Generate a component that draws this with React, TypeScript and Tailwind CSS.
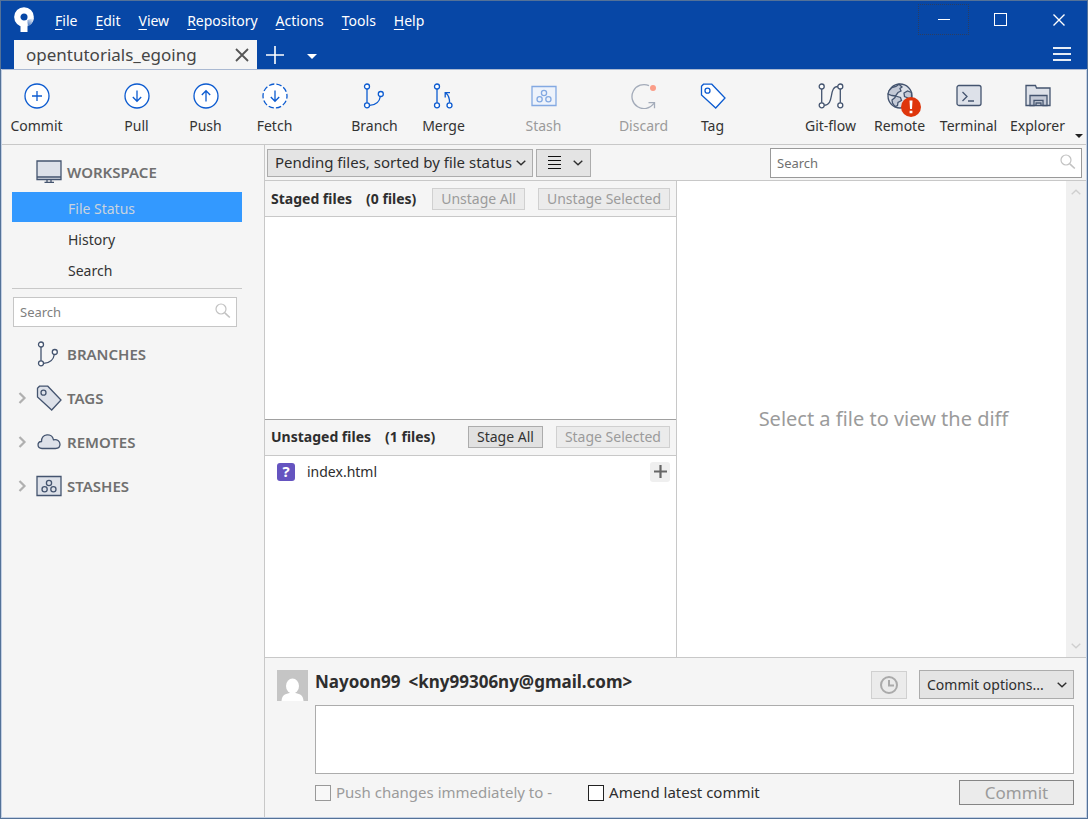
import type { ReactNode } from 'react';

const menus = ['File', 'Edit', 'View', 'Repository', 'Actions', 'Tools', 'Help'];

function Chevron({ className = '' }: { className?: string }) {
  return (
    <svg className={className} width="10" height="6" viewBox="0 0 10 6" fill="none" stroke="currentColor" strokeWidth="1.4">
      <path d="M0.7 0.7 5 4.8 9.3 0.7" />
    </svg>
  );
}

function Magnifier({ className = '' }: { className?: string }) {
  return (
    <svg className={className} width="16" height="16" viewBox="0 0 16 16" fill="none" stroke="#c2c2c2" strokeWidth="1.2">
      <circle cx="6" cy="6" r="5" />
      <path d="m9.8 9.8 5 4.7" strokeWidth="1.6" />
    </svg>
  );
}

function Icon({ children, color = '#0c5bd0', className = '' }: { children: ReactNode; color?: string; className?: string }) {
  return (
    <svg className={className} width="26" height="26" viewBox="0 0 26 26" fill="none" stroke={color} strokeWidth="1.3">
      {children}
    </svg>
  );
}

function CommitShape() {
  return (
    <>
      <circle cx="13" cy="13" r="12" fill="#fff" />
      <path d="M13 8v10M8 13h10" />
    </>
  );
}

function PullShape() {
  return (
    <>
      <circle cx="13" cy="13" r="12" fill="#fff" />
      <path d="M13 7.5v10.8M8.800 14l4.200 4.300 4.200-4.300" />
    </>
  );
}

function PushShape() {
  return (
    <>
      <circle cx="13" cy="13" r="12" fill="#fff" />
      <path d="M13 18.500V7.700M8.800 12 13 7.700l4.200 4.300" />
    </>
  );
}

function FetchShape() {
  return (
    <>
      <circle cx="13" cy="13" r="12" fill="#fff" strokeDasharray="5.4 2.14" strokeDashoffset="2.7" />
      <path d="M13 7.500v10.800M8.800 14l4.200 4.300 4.200-4.300" />
    </>
  );
}

function BranchShape() {
  return (
    <>
      <path d="M5 6v14M7.600 22.300c6.600-.2 10.200-4.300 10.800-9.300" />
      <circle cx="5" cy="3.500" r="2.500" fill="#fff" />
      <circle cx="5" cy="22.300" r="2.500" fill="#fff" />
      <circle cx="18.800" cy="11" r="2.500" fill="#fff" />
    </>
  );
}

function MergeShape() {
  return (
    <>
      <path d="M6 6v14M18.500 19.800c.2-4.500-.6-7.300-3.500-9.600M14.200 14.500v-4.800h4.800" />
      <circle cx="6" cy="3.500" r="2.500" fill="#fff" />
      <circle cx="6" cy="22.300" r="2.500" fill="#fff" />
      <circle cx="18.500" cy="22.300" r="2.500" fill="#fff" />
    </>
  );
}

function StashShape({ fill }: { fill: string }) {
  return (
    <>
      <path d="M1 3.500h24v19H1z" fill={fill} />
      <circle cx="13" cy="10" r="2.600" />
      <circle cx="8.600" cy="16.200" r="2.600" />
      <circle cx="17.400" cy="16.200" r="2.600" />
    </>
  );
}

function DiscardShape() {
  return (
    <>
      <path d="M18 2.700A12 12 0 1 0 22.800 20.500M17.500 19.700h6v5.500" />
      <circle cx="22" cy="5" r="3" fill="#fb9d88" stroke="none" />
    </>
  );
}

function TagShape({ fill }: { fill: string }) {
  return (
    <>
      <path d="M1.500 3.300 3.500 1.200h8.300L25 15l-9.300 10L1.500 12z" fill={fill} />
      <circle cx="7.500" cy="7.700" r="2.500" />
    </>
  );
}

function FlowShape() {
  return (
    <>
      <path d="M3.700 6v14M22.300 6v14M6 22.300c11 0 4-18.800 14-18.800" />
      <circle cx="3.700" cy="3.500" r="2.500" fill="#fff" />
      <circle cx="3.700" cy="22.300" r="2.500" fill="#fff" />
      <circle cx="22.300" cy="3.500" r="2.500" fill="#fff" />
      <circle cx="22.300" cy="22.300" r="2.500" fill="#fff" />
    </>
  );
}

function RemoteShape() {
  return (
    <>
      <circle cx="13" cy="13" r="12" fill="#dde1e9" />
      <path d="M5 4.500 9 3.500l3-2.300L15 4l-2 1.500L14 8l-3 1.500L8.500 13l-3.500-.5-4-1.500C1.500 8 3 6 5 4.500z" fill="#c3c9d6" />
      <path d="M8.500 13l5 1.500 1 3-3.500 2-.5 3-2.500 1.200L5.500 20 5 17l3-2.500zM24.500 9.500 20.500 8l-3.500 2 .5 3.500 3.500 1.500 3.500 1z" fill="#c3c9d6" />
    </>
  );
}

function TerminalShape() {
  return (
    <>
      <rect x="1" y="2.500" width="24" height="20" rx="2" fill="#dde1e9" />
      <path d="m6.500 9 4.500 4.500L6.500 18M12 18h6" />
    </>
  );
}

function ExplorerShape() {
  return (
    <>
      <path d="M1 22.500V2.500h9.500l1 2.500H25v17.500z" fill="#dde1e9" />
      <path d="M5 22.500v-10h17v10h-4v-5H9v5z" fill="#c3c9d6" />
      <path d="M11 22.500v-2.500h5v2.500" />
    </>
  );
}

function ToolButton({ label, color, disabled, badge, children }: { label: string; color?: string; disabled?: boolean; badge?: boolean; children: ReactNode }) {
  return (
    <button type="button" disabled={disabled} className="flex w-[69px] shrink-0 flex-col items-center gap-[7px] text-sm text-[#333] disabled:text-[#9b9b9b]">
      <span className="relative">
        <Icon color={color}>{children}</Icon>
        {badge && (
          <svg className="absolute top-3.5 left-3.5" width="20" height="20" viewBox="0 0 20 20">
            <circle cx="10" cy="10" r="10" fill="#df360c" />
            <path d="M8.500 3.500h3l-.5 8.500H9zM8.600 13.700h2.800v2.600H8.600z" fill="#fff" />
          </svg>
        )}
      </span>
      {label}
    </button>
  );
}

function TitleBar() {
  return (
    <div className="flex h-[39px] items-center pl-[13px] text-white">
      <svg className="mb-0.5" width="20" height="25" viewBox="0 0 20 25">
        <defs>
          <linearGradient id="stem" gradientUnits="userSpaceOnUse" x1="19" y1="11" x2="13" y2="19">
            <stop offset="0" stopColor="#fff" />
            <stop offset="1" stopColor="#3a6cb9" />
          </linearGradient>
        </defs>
        <circle cx="10" cy="10" r="6.700" fill="none" stroke="#fff" strokeWidth="6.300" />
        <path d="M13.500 13 19.800 11c-.5 4.500-2.800 7.300-6.300 8.300z" fill="url(#stem)" />
        <path d="M6.500 16.500h7V25h-7z" fill="#fff" />
      </svg>
      <nav className="ml-[21px] flex gap-[18px] text-sm">
        {menus.map((menu) => (
          <button key={menu} type="button">
            <span className="underline underline-offset-3">{menu[0]}</span>
            {menu.slice(1)}
          </button>
        ))}
      </nav>
      <div className="mt-[3px] mr-px ml-auto flex self-start">
        <button type="button" aria-label="Minimize" className="flex h-[31px] w-[51px] items-center justify-center border border-dotted border-[#2c3d5f]">
          <span className="h-px w-3 bg-white" />
        </button>
        <button type="button" aria-label="Maximize" className="flex h-[31px] w-[63px] items-center justify-center">
          <span className="size-[13px] border border-white" />
        </button>
        <button type="button" aria-label="Close" className="flex h-[31px] w-[54px] items-center justify-center">
          <svg width="12" height="12" viewBox="0 0 12 12" stroke="#fff" strokeWidth="1.400">
            <path d="m.5.5 11 11M11.500.5l-11 11" />
          </svg>
        </button>
      </div>
    </div>
  );
}

function TabBar() {
  return (
    <div className="flex h-[29px] items-center pl-[13px] text-white">
      <div className="flex h-full w-[243px] items-center justify-between bg-[#f5f5f5] pr-2 pl-3 text-[17px] text-[#454545]">
        opentutorials_egoing
        <button type="button" aria-label="Close tab">
          <svg width="14" height="14" viewBox="0 0 14 14" stroke="#555" strokeWidth="1.800">
            <path d="m1 1 12 12M13 1 1 13" />
          </svg>
        </button>
      </div>
      <button type="button" aria-label="New tab" className="ml-[9px]">
        <svg width="18" height="18" viewBox="0 0 18 18" stroke="#fff" strokeWidth="1.600">
          <path d="M9 0v18M0 9h18" />
        </svg>
      </button>
      <button type="button" aria-label="Tab list" className="mt-1 ml-[23px]">
        <svg width="10" height="5" viewBox="0 0 10 5" fill="#fff">
          <path d="M0 0h10L5 5z" />
        </svg>
      </button>
      <button type="button" aria-label="Menu" className="mr-4 mb-0.5 ml-auto flex w-[18px] flex-col gap-1">
        <span className="h-0.5 bg-white/90" />
        <span className="h-0.5 bg-white/90" />
        <span className="h-0.5 bg-white/90" />
      </button>
    </div>
  );
}

function Toolbar() {
  return (
    <div className="flex h-[76px] items-start border-t border-b border-t-[#aab9d2] border-b-[#c8c8c8] pt-[13px]">
      <div className="flex gap-[31px]">
        <ToolButton label="Commit"><CommitShape /></ToolButton>
        <div className="flex">
          <ToolButton label="Pull"><PullShape /></ToolButton>
          <ToolButton label="Push"><PushShape /></ToolButton>
          <ToolButton label="Fetch"><FetchShape /></ToolButton>
        </div>
        <div className="flex">
          <ToolButton label="Branch"><BranchShape /></ToolButton>
          <ToolButton label="Merge"><MergeShape /></ToolButton>
        </div>
        <ToolButton label="Stash" color="#83a9e2" disabled><StashShape fill="#eef3fb" /></ToolButton>
        <div className="flex">
          <ToolButton label="Discard" color="#a3abb9" disabled><DiscardShape /></ToolButton>
          <ToolButton label="Tag"><TagShape fill="#fff" /></ToolButton>
        </div>
      </div>
      <div className="ml-auto flex">
        <ToolButton label="Git-flow" color="#44546f"><FlowShape /></ToolButton>
        <ToolButton label="Remote" color="#44546f" badge><RemoteShape /></ToolButton>
        <ToolButton label="Terminal" color="#44546f"><TerminalShape /></ToolButton>
        <ToolButton label="Explorer" color="#44546f"><ExplorerShape /></ToolButton>
      </div>
      <button type="button" aria-label="More tools" className="mr-[3px] mb-1.5 ml-[3px] self-end">
        <svg width="8" height="4" viewBox="0 0 8 4" fill="#222">
          <path d="M0 0h8L4 4z" />
        </svg>
      </button>
    </div>
  );
}

function Section({ label, expandable, children }: { label: string; expandable?: boolean; children: ReactNode }) {
  return (
    <button type="button" className="flex h-11 w-full items-center pl-4 text-[15px] font-semibold text-[#707070]">
      <span className="flex w-[18px]">
        {expandable && (
          <svg width="9" height="12" viewBox="0 0 9 12" fill="none" stroke="#b0b0b0" strokeWidth="2.200">
            <path d="m1.500 1 5 5-5 5" />
          </svg>
        )}
      </span>
      <Icon color="#44546f" className="mr-[5px]">{children}</Icon>
      {label}
    </button>
  );
}

function Sidebar() {
  return (
    <aside className="w-[262px] shrink-0 pt-[5px]">
      <Section label="WORKSPACE">
        <path d="M1 2h24v18.500H1z" fill="#dde1e9" />
        <path d="M1 18h24M11 20.500v2.500M15 20.500v2.500M8.500 23.300h9.500" />
      </Section>
      <nav className="-mt-0.5 mr-[22px] ml-2.5 flex flex-col gap-px border-b border-[#c8c8c8] pb-1 text-sm text-[#333]">
        <a href="#status" className="flex h-[30px] items-center bg-[#3399ff] pt-1 pl-14 text-[#c9d3de]">File Status</a>
        <a href="#history" className="flex h-[30px] items-center pt-1 pl-14">History</a>
        <a href="#search" className="flex h-[30px] items-center pt-1 pl-14">Search</a>
      </nav>
      <div className="relative mt-2 mr-[27px] mb-[5px] ml-[11px]">
        <input aria-label="Search branches" placeholder="Search" className="block h-[30px] w-full border border-[#c6c6c6] bg-white px-1.5 text-[13px] outline-none placeholder:text-[#808080]" />
        <Magnifier className="absolute top-1.5 right-1.5" />
      </div>
      <Section label="BRANCHES"><BranchShape /></Section>
      <Section label="TAGS" expandable><TagShape fill="#dde1e9" /></Section>
      <Section label="REMOTES" expandable>
        <path d="M6 19.500C.8 19.300.8 12.800 5.500 12.500 5.500 4.500 16 3.500 17.500 10.800c3.500-1 6.500 1.200 6.500 4.500 0 2.800-1.800 4.200-4.500 4.200z" fill="#dde1e9" />
      </Section>
      <Section label="STASHES" expandable><StashShape fill="#dde1e9" /></Section>
    </aside>
  );
}

function SmallButton({ children, disabled }: { children: ReactNode; disabled?: boolean }) {
  return (
    <button type="button" disabled={disabled} className="h-[22px] shrink-0 border border-[#acacac] bg-[#e1e1e1] px-2 text-sm whitespace-nowrap text-[#333] disabled:border-[#d0d0d0] disabled:bg-[#ebebeb] disabled:text-[#9b9b9b]">
      {children}
    </button>
  );
}

function FileHeader({ title, count, children }: { title: string; count: number; children: ReactNode }) {
  return (
    <div className="flex h-9 shrink-0 items-center justify-between border-b border-[#c8c8c8] bg-[#f5f5f5] px-1.5">
      <h2 className="flex gap-3.5 text-sm font-bold whitespace-nowrap">
        <span>{title}</span>
        <span>({count} files)</span>
      </h2>
      <div className="flex gap-[13px]">{children}</div>
    </div>
  );
}

function FilterBar() {
  return (
    <div className="flex h-9 items-center border-b border-[#c8c8c8] pr-1 pl-0.5">
      <div className="relative">
        <select aria-label="File filter" className="block h-7 w-[266px] appearance-none border border-[#acacac] bg-[#e4e4e4] px-[7px] text-[15px] outline-none">
          <option>Pending files, sorted by file status</option>
        </select>
        <Chevron className="pointer-events-none absolute top-[11px] right-[7px]" />
      </div>
      <button type="button" aria-label="View mode" className="ml-[3px] flex h-7 w-[55px] items-center justify-between border border-[#acacac] bg-[#e4e4e4] pr-[7px] pl-[11px]">
        <svg width="13" height="13" viewBox="0 0 13 13" stroke="#111">
          <path d="M0 .5h13M0 4.500h13M0 8.500h13M0 12.500h13" />
        </svg>
        <Chevron />
      </button>
      <div className="relative ml-auto w-[312px]">
        <input aria-label="Search files" placeholder="Search" className="block h-[30px] w-full border border-[#999] bg-white px-1.5 text-[13px] outline-none placeholder:text-[#707070]" />
        <Magnifier className="absolute top-1.5 right-1.5" />
      </div>
    </div>
  );
}

function FilePanes() {
  return (
    <div className="flex w-[412px] shrink-0 flex-col border-r border-[#c8c8c8]">
      <FileHeader title="Staged files" count={0}>
        <SmallButton disabled>Unstage All</SmallButton>
        <SmallButton disabled>Unstage Selected</SmallButton>
      </FileHeader>
      <div className="flex-1 border-b border-[#a0a0a0] bg-white" />
      <FileHeader title="Unstaged files" count={1}>
        <SmallButton>Stage All</SmallButton>
        <SmallButton disabled>Stage Selected</SmallButton>
      </FileHeader>
      <ul className="flex-1 bg-white">
        <li className="flex h-8 items-center pr-1.5 pl-3 text-sm">
          <span className="mr-3 flex size-[18px] items-center justify-center rounded-[3px] bg-[#6554c0] text-[15px] font-bold text-white">?</span>
          index.html
          <button type="button" aria-label="Stage index.html" className="ml-auto flex size-5 items-center justify-center rounded-[3px] bg-[#efefef]">
            <svg width="13" height="13" viewBox="0 0 13 13" stroke="#666" strokeWidth="2.200">
              <path d="M6.500 0v13M0 6.500h13" />
            </svg>
          </button>
        </li>
      </ul>
    </div>
  );
}

function DiffPane() {
  return (
    <div className="flex min-w-0 flex-1 bg-white">
      <p className="flex flex-1 items-center justify-center pl-6 text-xl text-[#9b9b9b]">Select a file to view the diff</p>
      <div className="flex w-5 flex-col items-center justify-between bg-[#f0f0f0] py-2 text-[#cfcfcf]">
        <Chevron className="rotate-180" />
        <Chevron />
      </div>
    </div>
  );
}

function CommitPanel() {
  return (
    <div className="flex h-[160px] border-t border-[#c8c8c8] px-3 pt-3">
      <svg className="mr-[7px] shrink-0" width="31" height="31" viewBox="0 0 31 31">
        <path d="M0 0h31v31H0z" fill="#c5c5c5" />
        <ellipse cx="15.500" cy="16" rx="6.500" ry="7.500" fill="#fff" />
        <path d="M4.500 31c.5-5.500 3-7 8-8h6c5 1 7.500 2.500 8 8z" fill="#fff" />
      </svg>
      <form className="flex min-w-0 flex-1 flex-col" onSubmit={(e) => e.preventDefault()}>
        <div className="flex h-[35px] items-start">
          <span className="flex gap-2 text-[17px] leading-6 font-bold">
            <span>Nayoon99</span>
            <span>&lt;kny99306ny@gmail.com&gt;</span>
          </span>
          <button type="button" disabled aria-label="Recent messages" className="mt-px mr-3 ml-auto flex h-7 w-9 items-center justify-center border border-[#d0d0d0] bg-[#ebebeb]">
            <svg width="18" height="18" viewBox="0 0 18 18" fill="none" stroke="#aaa" strokeWidth="2">
              <circle cx="9" cy="9" r="8" />
              <path d="M9 4v5.500h5" />
            </svg>
          </button>
          <div className="relative">
            <select aria-label="Commit options" className="block h-[29px] w-[155px] appearance-none border border-[#acacac] bg-[#e4e4e4] px-[7px] text-sm outline-none">
              <option>Commit options...</option>
            </select>
            <Chevron className="pointer-events-none absolute top-3 right-[7px]" />
          </div>
        </div>
        <textarea aria-label="Commit message" className="block h-[69px] w-full resize-none border border-[#acacac] bg-white p-1.5 text-sm outline-none" />
        <div className="mt-1.5 flex items-center text-[15px]">
          <label className="flex items-center gap-[5px] text-[#9b9b9b]">
            <input type="checkbox" disabled className="size-4 appearance-none border border-[#999] bg-[#f8f8f8]" />
            Push changes immediately to -
          </label>
          <label className="ml-9 flex items-center gap-[5px]">
            <input type="checkbox" className="size-4 appearance-none border border-[#222] bg-white" />
            Amend latest commit
          </label>
          <button type="submit" disabled className="ml-auto h-[25px] w-[115px] border border-[#858585] bg-[#ebebeb] text-[17px] leading-6 text-[#9b9b9b]">
            Commit
          </button>
        </div>
      </form>
    </div>
  );
}

export default function App() {
  return (
    <div className="flex min-h-screen flex-col border border-[#547298] bg-[#f5f5f5] font-['Noto_Sans',sans-serif] text-[#2e2e2e]">
      <header className="bg-[#0747a6]">
        <TitleBar />
        <TabBar />
      </header>
      <div className="flex flex-1 flex-col border-x border-b border-[#c3d0e4]">
        <Toolbar />
        <div className="flex flex-1">
          <Sidebar />
          <main className="flex min-w-0 flex-1 flex-col border-l border-[#c8c8c8]">
            <FilterBar />
            <div className="flex flex-1">
              <FilePanes />
              <DiffPane />
            </div>
            <CommitPanel />
          </main>
        </div>
      </div>
    </div>
  );
}
